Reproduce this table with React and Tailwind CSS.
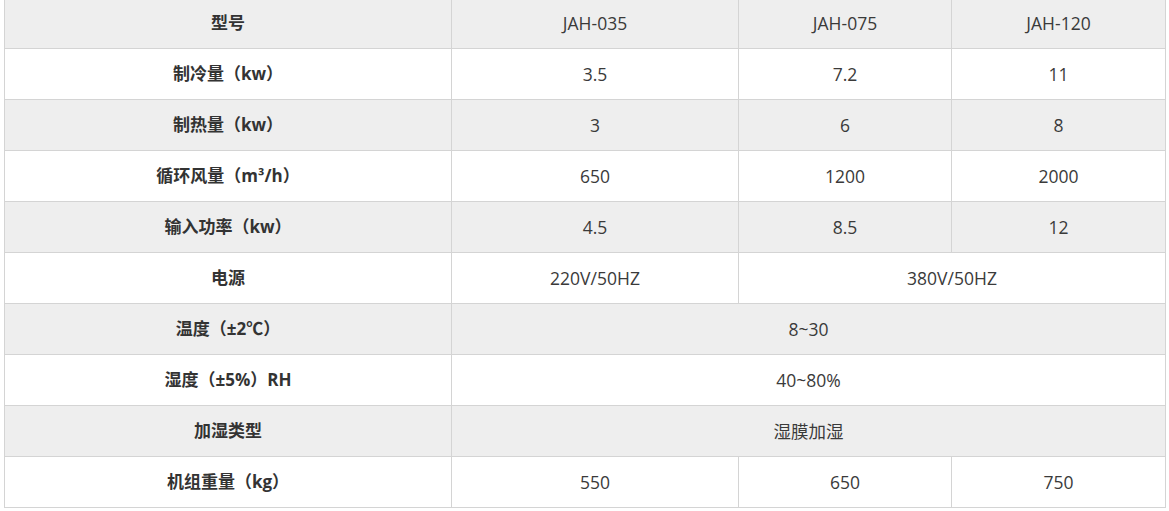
import React from "react";

const font = { fontFamily: '"Open Sans","Noto Sans CJK SC",sans-serif' };

const rows = [
  { label: "制冷量（kw）", cells: [["3.5", 1], ["7.2", 1], ["11", 1]] },
  { label: "制热量（kw）", cells: [["3", 1], ["6", 1], ["8", 1]] },
  { label: "循环风量（m³/h）", cells: [["650", 1], ["1200", 1], ["2000", 1]] },
  { label: "输入功率（kw）", cells: [["4.5", 1], ["8.5", 1], ["12", 1]] },
  { label: "电源", cells: [["220V/50HZ", 1], ["380V/50HZ", 2]] },
  { label: "温度（±2℃）", cells: [["8~30", 3]] },
  { label: "湿度（±5%）RH", cells: [["40~80%", 3]] },
  { label: "加湿类型", cells: [["湿膜加湿", 3]] },
  { label: "机组重量（kg）", cells: [["550", 1], ["650", 1], ["750", 1]] },
];

const head = "border border-[#d4d4d4] text-center font-bold text-[17px] text-[#333]";
const cell = "border border-[#d4d4d4] text-center text-[17.5px] text-[#3a3a3a]";

export default function App() {
  return (
    <div className="w-[1169px] h-[511px] bg-white overflow-hidden">
      <table
        className="mt-[-3px] ml-[4px] w-[1161px] border-collapse table-fixed"
        style={font}
      >
        <colgroup>
          <col className="w-[447px]" />
          <col className="w-[287px]" />
          <col className="w-[213px]" />
          <col className="w-[214px]" />
        </colgroup>
        <tbody>
          <tr className="h-[51px] bg-[#eeeeee]">
            <td className={head}>型号</td>
            <td className={cell}>JAH-035</td>
            <td className={cell}>JAH-075</td>
            <td className={cell}>JAH-120</td>
          </tr>
          {rows.map((r, i) => (
            <tr key={i} className={"h-[51px] " + (i % 2 === 0 ? "bg-white" : "bg-[#eeeeee]")}>
              <td className={head}>{r.label}</td>
              {r.cells.map(([t, span], j) => (
                <td key={j} colSpan={span} className={cell}>
                  {t}
                </td>
              ))}
            </tr>
          ))}
        </tbody>
      </table>
    </div>
  );
}
